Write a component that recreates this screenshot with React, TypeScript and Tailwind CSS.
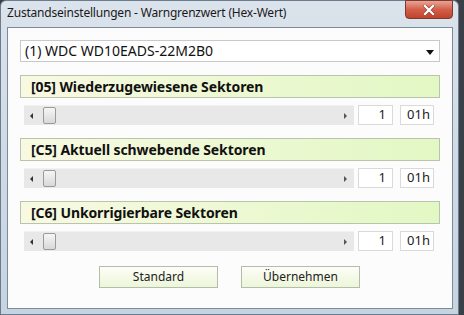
import React from "react";

const font = { fontFamily: '"Noto Sans", "Open Sans", sans-serif' };

function Section({ label }: { label: string }) {
  return (
    <div className="flex flex-col">
      <div className="ml-[12px] w-[420px] h-[23px] border border-[#b9c3ad] bg-gradient-to-r from-[#f8f9e2] to-[#e2f8c4] flex items-center pl-[10px] pt-[1px]">
        <span className="text-[14px] font-bold text-[#111] leading-none tracking-[-0.1px]">{label}</span>
      </div>
      <div className="flex mt-[7px] h-[20px] items-stretch">
        <div className="ml-[16px] w-[330px] bg-[#e8e8e8] border-t border-[#f2f2f2] flex items-center relative">
          <div className="ml-[6px] w-0 h-0 border-y-[3px] border-y-transparent border-r-[3px] border-r-[#333]" />
          <div className="ml-[10px] w-[13px] h-[17px] rounded-[2px] border border-[#9a9a9a] bg-gradient-to-b from-[#f6f6f6] to-[#d8d8d8]" />
          <div className="absolute right-[7px] top-[7px] w-0 h-0 border-y-[3px] border-y-transparent border-l-[3px] border-l-[#555]" />
        </div>
        <div className="ml-[4px] w-[35px] border border-[#dadada] bg-white flex items-center justify-end pr-[6px] text-[13px] text-[#222]">1</div>
        <div className="ml-[7px] w-[34px] border border-[#dadada] bg-white flex items-center justify-end pr-[3px] text-[13px] text-[#222]">01h</div>
      </div>
    </div>
  );
}

export default function App() {
  return (
    <div className="w-[464px] h-[315px] overflow-hidden bg-[#3a4048] flex" style={font}>
      <div className="w-[459px] h-[315px] rounded-t-[6px] bg-gradient-to-b from-[#dbe3ec] via-[#cfdae6] to-[#c6d4e2] border border-[#6d7c8c] flex flex-col">
        <div className="h-[26px] flex items-start relative">
          <span className="ml-[6px] mt-[5px] text-[12px] text-[#1a1a1a] leading-[14px] tracking-[-0.2px]">
            Zustandseinstellungen - Warngrenzwert (Hex-Wert)
          </span>
          <div className="absolute left-[404px] top-[-1px] w-[48px] h-[19px] rounded-b-[4px] border border-[#7a3a30] bg-gradient-to-b from-[#e9a497] via-[#d35f49] to-[#c0432c] flex items-center justify-center">
            <svg width="12" height="10" viewBox="0 0 12 10">
              <path d="M2 1 L10 9 M10 1 L2 9" stroke="#5a1a10" strokeWidth="3.6" strokeLinecap="square" opacity="0.6" />
              <path d="M2 1 L10 9 M10 1 L2 9" stroke="#ffffff" strokeWidth="2.4" strokeLinecap="square" />
            </svg>
          </div>
        </div>
        <div className="ml-[6px] w-[446px] h-[282px] bg-[#fcfcfc] border border-[#7d8a98] flex flex-col">
          <div className="ml-[12px] mt-[12px] w-[420px] h-[22px] border border-[#c9c9c9] bg-white flex items-center pl-[4px] relative">
            <span className="text-[14px] text-[#111] leading-none">(1) WDC WD10EADS-22M2B0</span>
            <div className="absolute right-[5px] top-[9px] w-0 h-0 border-x-[4px] border-x-transparent border-t-[5px] border-t-[#111]" />
          </div>
          <div className="mt-[13px] flex flex-col gap-[13px]">
            <Section label="[05] Wiederzugewiesene Sektoren" />
            <Section label="[C5] Aktuell schwebende Sektoren" />
            <Section label="[C6] Unkorrigierbare Sektoren" />
          </div>
          <div className="mt-[15px] flex">
            <div className="ml-[91px] w-[119px] h-[22px] border border-[#b5bcab] bg-gradient-to-b from-[#fdfdf8] to-[#ecf6d8] flex items-center justify-center text-[12px] text-[#222]">Standard</div>
            <div className="ml-[23px] w-[119px] h-[22px] border border-[#b5bcab] bg-gradient-to-b from-[#fdfdf8] to-[#ecf6d8] flex items-center justify-center text-[12px] text-[#222]">Übernehmen</div>
          </div>
        </div>
      </div>
    </div>
  );
}
